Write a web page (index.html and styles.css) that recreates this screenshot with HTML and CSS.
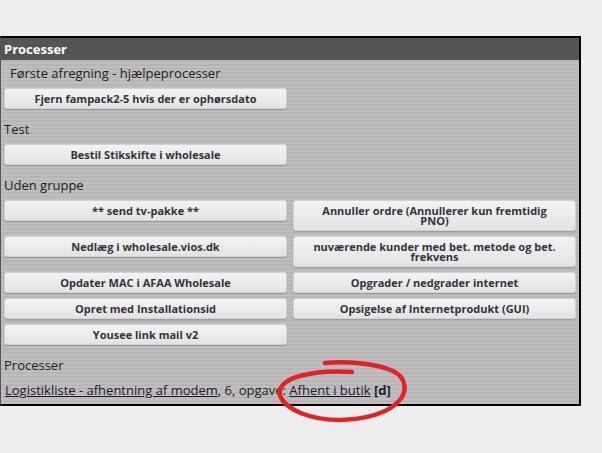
FILE: index.html
```html
<!DOCTYPE html>
<html lang="da">
<head>
<meta charset="utf-8">
<title>Processer</title>
<link rel="stylesheet" href="styles.css">
</head>
<body>
<div class="panel">
  <div class="panel-header">Processer</div>
  <div class="panel-body">
    <div class="group-title indent">Første afregning - hjælpeprocesser</div>
    <div class="btn-grid">
      <button class="btn">Fjern fampack2-5 hvis der er ophørsdato</button>
    </div>
    <div class="group-title">Test</div>
    <div class="btn-grid">
      <button class="btn">Bestil Stikskifte i wholesale</button>
    </div>
    <div class="group-title">Uden gruppe</div>
    <div class="btn-grid">
      <button class="btn">** send tv-pakke **</button>
      <button class="btn">Annuller ordre (Annullerer kun fremtidig PNO)</button>
      <button class="btn">Nedlæg i wholesale.vios.dk</button>
      <button class="btn">nuværende kunder med bet. metode og bet. frekvens</button>
      <button class="btn">Opdater MAC i AFAA Wholesale</button>
      <button class="btn">Opgrader / nedgrader internet</button>
      <button class="btn">Opret med Installationsid</button>
      <button class="btn">Opsigelse af Internetprodukt (GUI)</button>
      <button class="btn">Yousee link mail v2</button>
    </div>
    <div class="group-title">Processer</div>
    <div class="process-line"><a class="link" href="#">Logistikliste - afhentning af modem</a>, 6, opgave: <a class="link" href="#">Afhent i butik</a> <b>[d]</b></div>
  </div>
</div>
<svg class="annotation" width="602" height="453" viewBox="0 0 602 453" aria-hidden="true">
  <path d="M325,363 C345,361 375,363 393,371 C407,378 408,392 398,402 C388,412 368,419 340,420 C310,420 288,410 281,398 C276,388 285,380 300,376 C315,372 335,371 352,372" fill="none" stroke="#e42222" stroke-width="4.5" stroke-linecap="round" stroke-linejoin="round"/>
</svg>
</body>
</html>
```
FILE: styles.css
```css
html, body {
  margin: 0;
  padding: 0;
}
body {
  background: #eeeeee;
  font-family: "Open Sans", "DejaVu Sans", sans-serif;
  color: #222222;
  padding-top: 36px;
  position: relative;
  min-height: 453px;
  box-sizing: border-box;
}
.panel {
  width: 578px;
  border: 2px solid #000000;
  border-left: 1px solid #555555;
  background: repeating-linear-gradient(to bottom, #bebebe 0, #bebebe 2px, #b6b6b6 2px, #b6b6b6 4px);
}
.panel-header {
  background: #555555;
  color: #ffffff;
  font-weight: 700;
  font-size: 13px;
  height: 22px;
  line-height: 22px;
  padding-left: 3px;
}
.panel-body {
  padding: 0 3px 5px 3px;
}
.group-title {
  font-size: 13px;
  line-height: 18px;
  margin-top: 11px;
  color: #222222;
}
.panel-body > .group-title:first-child {
  margin-top: 4px;
}
.group-title.indent {
  padding-left: 6px;
}
.btn-grid {
  display: grid;
  grid-template-columns: 283px 283px;
  column-gap: 6px;
  row-gap: 5px;
  align-items: start;
  margin-top: 6px;
}
.btn {
  font-family: "Open Sans", "DejaVu Sans", sans-serif;
  font-weight: 700;
  font-size: 11px;
  line-height: 10px;
  color: #33333d;
  padding: 5px 16px 4px 16px;
  margin: 0;
  border: 1px solid #d2d2d2;
  border-radius: 3px;
  background: linear-gradient(to bottom, #f3f3f3, #e3e3e3);
  box-shadow: 0 1px 1px rgba(0, 0, 0, 0.18);
  text-align: center;
  width: 100%;
  box-sizing: border-box;
}
.process-line {
  font-size: 13px;
  line-height: 18px;
  margin-top: 7px;
  padding-left: 1px;
  color: #222222;
}
.link {
  color: #2a1535;
  text-decoration: underline;
}
.annotation {
  position: absolute;
  left: 0;
  top: 0;
  pointer-events: none;
}
```
